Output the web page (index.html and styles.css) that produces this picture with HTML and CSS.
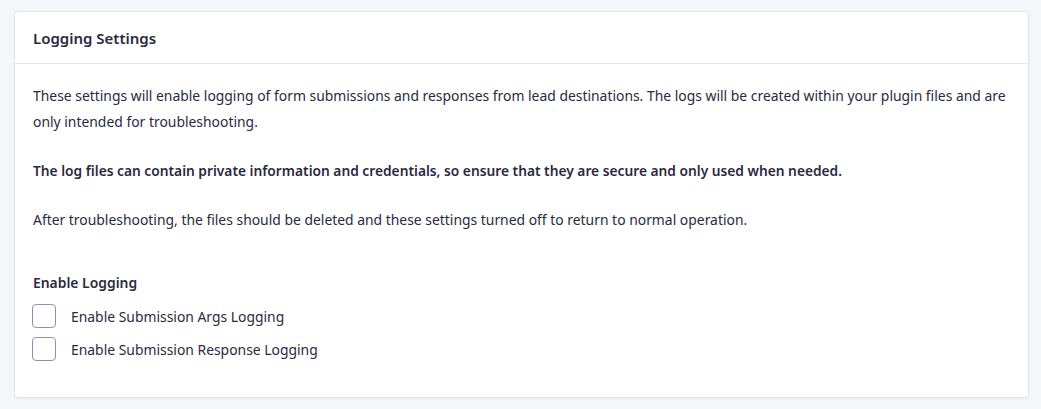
FILE: index.html
```html
<!DOCTYPE html>
<html>
<head>
<meta charset="utf-8">
<link rel="stylesheet" href="styles.css">
</head>
<body>
<div class="card">
  <div class="card-header">Logging Settings</div>
  <div class="card-body">
    <p>These settings will enable logging of form submissions and responses from lead destinations. The logs will be created within your plugin files and are only intended for troubleshooting.</p>
    <p class="strong">The log files can contain private information and credentials, so ensure that they are secure and only used when needed.</p>
    <p>After troubleshooting, the files should be deleted and these settings turned off to return to normal operation.</p>
    <div class="field">
      <div class="field-label">Enable Logging</div>
      <label class="check"><span class="box"></span><span>Enable Submission Args Logging</span></label>
      <label class="check"><span class="box"></span><span>Enable Submission Response Logging</span></label>
    </div>
  </div>
</div>
</body>
</html>
```
FILE: styles.css
```css
html, body { margin: 0; padding: 0; }
body {
  background: #f4f6fa;
  font-family: "Noto Sans", sans-serif;
  color: #2a2a40;
  font-size: 13.9px;
  padding: 11px 12px 12px 14px;
}
.card {
  background: #fff;
  border: 1px solid #e2e5ee;
  border-radius: 4px;
  box-shadow: 0 1px 2px rgba(30, 40, 90, 0.06);
}
.card-header {
  height: 52px;
  box-sizing: border-box;
  padding: 16px 18px 0;
  font-size: 15px;
  font-weight: 600;
  border-bottom: 1px solid #e5e7ee;
}
.card-body {
  padding: 19px 18px 36px;
}
.card-body p {
  margin: 0 0 23px;
  line-height: 26px;
}
.card-body p.strong { font-weight: 600; font-size: 13.75px; }
.field { padding-top: 17px; }
.field-label { font-weight: 600; line-height: 20px; margin-bottom: 11px; }
.check {
  display: flex;
  align-items: center;
  gap: 15px;
  height: 24px;
  margin-bottom: 9px;
}
.check:last-child { margin-bottom: 0; }
.box {
  width: 22px;
  height: 22px;
  margin-left: -1px;
  border: 1px solid #8d90b6;
  border-radius: 4px;
  background: #fff;
}
```
